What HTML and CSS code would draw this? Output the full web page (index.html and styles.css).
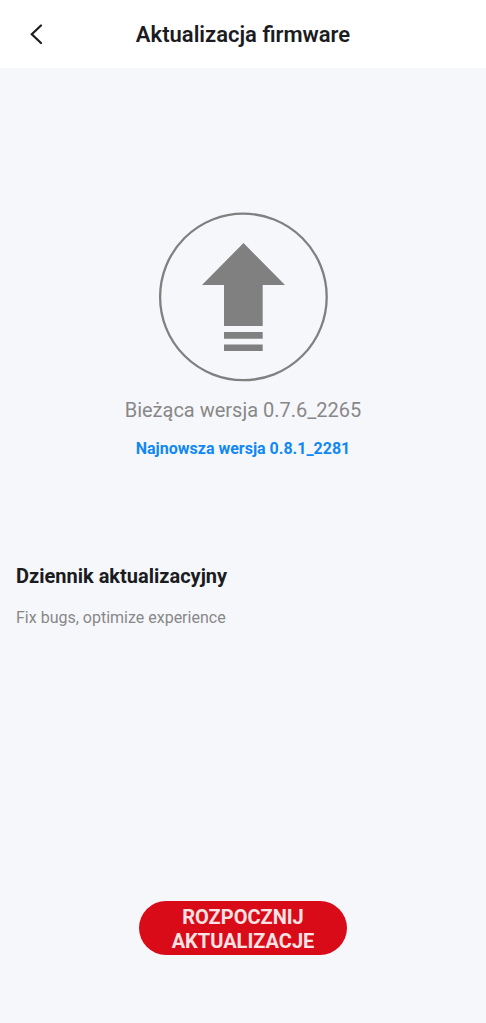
FILE: index.html
```html
<!DOCTYPE html>
<html lang="pl">
<head>
<meta charset="utf-8">
<meta name="viewport" content="width=device-width, initial-scale=1">
<title>Aktualizacja firmware</title>
<link rel="stylesheet" href="styles.css">
</head>
<body>
<div class="page">
  <header class="header">
    <button class="back" type="button" aria-label="Wstecz">
      <svg width="24" height="24" viewBox="0 0 24 24" fill="none" stroke="#1b1d20" stroke-width="2.200" stroke-linecap="round"><path d="M17 3.500 7.800 12.200 17 21"/></svg>
    </button>
    <h1 class="title">Aktualizacja firmware</h1>
  </header>
  <main class="content">
    <section class="status">
      <svg class="emblem" width="170" height="170" viewBox="0 0 170 170" fill="#808080">
        <circle cx="85.400" cy="84.900" r="83.300" fill="none" stroke="#808080" stroke-width="2.300"/>
        <path d="M85.500 31 127 73H104.700V114H66V73H44Z"/>
        <path d="M66 120h38.700v6.700H66zM66 132.500h38.700v6.500H66z"/>
      </svg>
      <p class="current">Bieżąca wersja 0.7.6_2265</p>
      <p class="latest">Najnowsza wersja 0.8.1_2281</p>
    </section>
    <section class="log">
      <h2 class="log-title">Dziennik aktualizacyjny</h2>
      <p class="log-text">Fix bugs, optimize experience</p>
    </section>
  </main>
  <footer class="footer">
    <button class="start" type="button">ROZPOCZNIJ AKTUALIZACJE</button>
  </footer>
</div>
</body>
</html>
```
FILE: styles.css
```css
* { box-sizing: border-box; }
body { margin: 0; background: #f6f7fb; color: #1b1c1f; font-family: Roboto, sans-serif; }
h1, h2, p { margin: 0; }
.page { min-height: 100vh; display: flex; flex-direction: column; }
.header { display: grid; grid-template-columns: 48px 1fr 48px; align-items: center; padding: 10px 12px; background: #fff; }
.back { display: flex; align-items: center; justify-content: center; width: 48px; height: 48px; padding: 0; border: 0; background: none; cursor: pointer; }
.title { padding-top: 2px; font-size: 22px; line-height: 24px; font-weight: 600; text-align: center; }
.content { flex: 1; padding: 144px 16px 24px; }
.status { display: flex; flex-direction: column; align-items: center; text-align: center; }
.emblem { display: block; }
.current { margin-top: 16px; font-size: 20px; line-height: 24px; color: #888; }
.latest { margin-top: 16px; font-size: 16px; line-height: 22px; font-weight: 700; color: #1088f5; }
.log { margin-top: 104px; }
.log-title { font-size: 20px; line-height: 24px; font-weight: 700; }
.log-text { margin-top: 20px; font-size: 16px; line-height: 20px; color: #888; }
.footer { display: flex; justify-content: center; padding: 0 16px 68px; }
.start { width: 208px; padding: 4px 24px 2px; border: 0; border-radius: 27px; background: #d90b18; color: #fde3e5; font: 700 20px/24px Roboto, sans-serif; cursor: pointer; }
```
